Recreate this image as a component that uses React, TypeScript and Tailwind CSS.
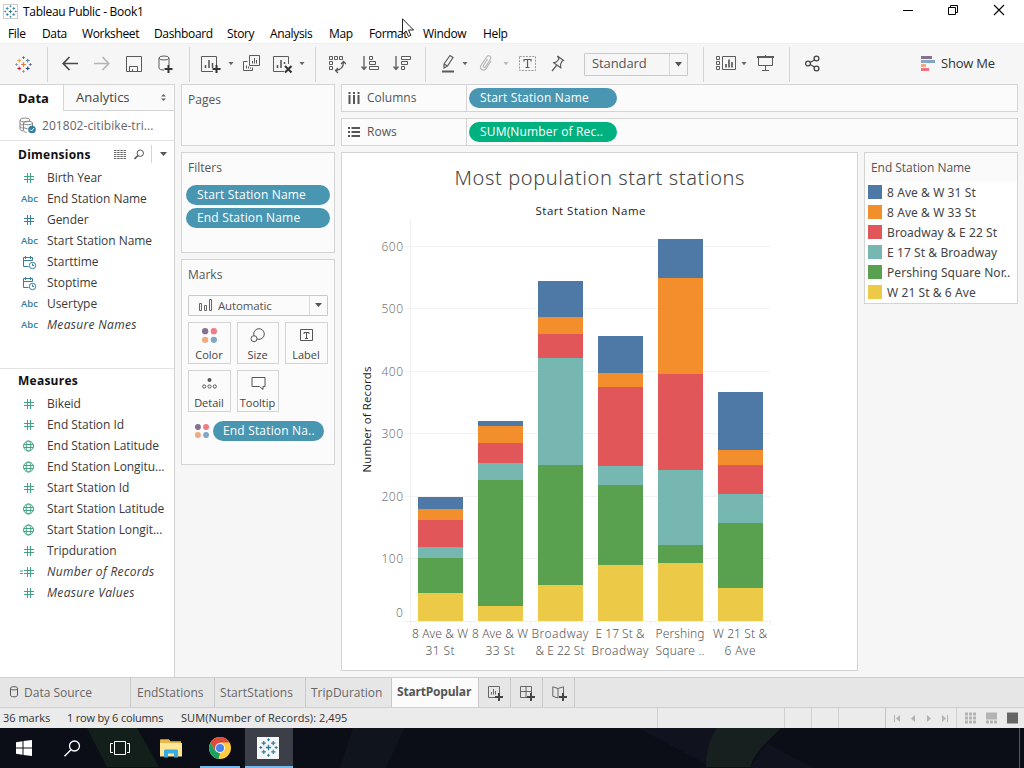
import type { ReactNode } from 'react';
import clsx from 'clsx';

const UI = "font-['Open_Sans','Noto_Sans',sans-serif]";

const COLORS = {
  blue: '#4e79a7',
  orange: '#f28e2b',
  red: '#e15759',
  teal: '#76b7b2',
  green: '#59a14f',
  yellow: '#edc948',
};

/* ---------- small drawing helpers ---------- */

function Svg({ w, h, className, children }: { w: number; h: number; className?: string; children: ReactNode }) {
  return (
    <svg width={w} height={h} viewBox={`0 0 ${w} ${h}`} fill="none" className={clsx('block shrink-0', className)}>
      {children}
    </svg>
  );
}

function Tool({ w, className, color = '#5b5b5b', children }: { w: number; className?: string; color?: string; children: ReactNode }) {
  return (
    <svg
      width={w}
      height={20}
      viewBox={`0 0 ${w} 20`}
      fill="none"
      stroke={color}
      className={clsx('block shrink-0', className)}
    >
      {children}
    </svg>
  );
}

function Caret({ className, color = '#666' }: { className?: string; color?: string }) {
  return (
    <Svg w={6} h={4} className={className}>
      <path d="M.5 0h5L3 3.2z" fill={color} />
    </Svg>
  );
}

function Sep({ className }: { className?: string }) {
  return <div className={clsx('w-px h-[35px] bg-[#d4d4d4] shrink-0', className)} />;
}

const plus = (x: number, y: number, r: number) => `M${x - r} ${y}h${r * 2}M${x} ${y - r}v${r * 2}`;

function TableauMark({ size, mono }: { size: number; mono?: boolean }) {
  const c = (v: string) => (mono ? '#2f7a9b' : v);
  return (
    <svg width={size} height={size} viewBox="0 0 18 18" fill="none" className="block shrink-0">
      <path d={plus(9, 9, 2.5)} stroke={c('#e8762c')} strokeWidth="1.3" />
      <path d={plus(4.5, 4.8, 2)} stroke={c('#e8a33d')} strokeWidth="1.1" />
      <path d={plus(13.5, 4.8, 2)} stroke={c('#5b879b')} strokeWidth="1.1" />
      <path d={plus(4.5, 13.2, 2)} stroke={c('#c72035')} strokeWidth="1.1" />
      <path d={plus(13.5, 13.2, 2)} stroke={c('#1f457e')} strokeWidth="1.1" />
      <path d={plus(9, 1.7, 1.4)} stroke={c('#5c6692')} strokeWidth="1" />
      <path d={plus(9, 16.3, 1.4)} stroke={c('#7199a6')} strokeWidth="1" />
      <path d={plus(1.7, 9, 1.4)} stroke={c('#7199a6')} strokeWidth="1" />
      <path d={plus(16.3, 9, 1.4)} stroke={c('#5c6692')} strokeWidth="1" />
    </svg>
  );
}

/* ---------- title and menu ---------- */

function TitleBar() {
  return (
    <div className="h-[23px] flex items-center bg-white pl-[3px]">
      <div className="w-[15px] h-[15px] border border-[#ccc] flex items-center justify-center">
        <TableauMark size={13} mono />
      </div>
      <span className="ml-[5px] mt-px text-[12px] leading-4 text-black tracking-[-0.28px]">Tableau Public - Book1</span>
      <Svg w={102} h={12} className="ml-auto mr-[19px] mt-[-3px]">
        <path d="M0 6.5h10" stroke="#000" />
        <path d="M45.5 3.5h7v7h-7zM47.5 3.5v-2h7v7h-2" stroke="#000" />
        <path d="M91 1l10 10M101 1L91 11" stroke="#000" strokeWidth="1.1" />
      </Svg>
    </div>
  );
}

const MENU = [
  { label: 'File', w: 'w-[34px]' },
  { label: 'Data', w: 'w-[40px]' },
  { label: 'Worksheet', w: 'w-[72px]' },
  { label: 'Dashboard', w: 'w-[73px]' },
  { label: 'Story', w: 'w-[43px]' },
  { label: 'Analysis', w: 'w-[59px]' },
  { label: 'Map', w: 'w-[40px]' },
  { label: 'Format', w: 'w-[54px]' },
  { label: 'Window', w: 'w-[60px]' },
  { label: 'Help', w: 'w-[40px]' },
];

function MenuBar() {
  return (
    <div className="h-5 flex items-center bg-white pl-2 pt-[2px] text-[12px] leading-4 text-black tracking-[-0.35px]">
      {MENU.map((m) => (
        <span key={m.label} className={clsx('shrink-0 whitespace-nowrap', m.w)}>
          {m.label}
        </span>
      ))}
    </div>
  );
}

/* ---------- toolbar ---------- */

function Toolbar() {
  return (
    <div className="h-[41px] flex items-center bg-[#f6f6f6] border-t border-[#efefef]">
      <div className="w-[47px] pl-[15px]">
        <TableauMark size={17} />
      </div>
      <Sep />
      <Tool w={16} className="ml-[14px]" color="#4a4a4a">
        <path d="M7.5 3L1.200 9.500l6.300 6.500M1.200 9.500H16" strokeWidth="1.7" />
      </Tool>
      <Tool w={16} className="ml-4" color="#b5b5b5">
        <path d="M8.5 3l6.3 6.5L8.5 16M14.8 9.5H0" strokeWidth="1.7" />
      </Tool>
      <Tool w={16} className="ml-4">
        <path d="M.5 2.500h15v15H.5zM3.500 17.500v-5h8v5M6.500 17.500v-2.500" />
      </Tool>
      <Tool w={15} className="ml-4">
        <ellipse cx="6" cy="4" rx="5" ry="2" />
        <path d="M1 4v10c0 1.200 2 2 5 2M11 4v7" />
        <path d="M10.500 11v8M6.500 15h8" strokeWidth="2" stroke="#333" />
      </Tool>
      <Sep className="ml-4" />
      <Tool w={20} className="ml-[11px]">
        <path d="M12 17.500H.5v-15h15V11" />
        <path d="M4.500 14v-3M8 14V6M11.500 14V9" strokeWidth="1.600" />
        <path d="M15.500 11v8M11.500 15h8" strokeWidth="2" stroke="#333" />
      </Tool>
      <Caret className="ml-[7px]" />
      <Tool w={18} className="ml-[9px]">
        <path d="M6.500 1.500h10v10h-10zM4.500 7.500h-4v9h9v-3" />
        <path d="M9.500 9.500V7M11.500 9.500V4M13.500 9.500V6M3.500 14.500v-3M5.500 14.500v-2M7.500 14.500v-1" />
      </Tool>
      <Tool w={20} className="ml-[12px]">
        <path d="M11 17.500H.5v-15h15V10" />
        <path d="M4.500 14v-3M8 14V6M11.500 10V8" strokeWidth="1.600" />
        <path d="M12 12l6.500 6.500M18.500 12L12 18.500" strokeWidth="2.100" stroke="#333" />
      </Tool>
      <Caret className="ml-[6px]" />
      <Sep className="ml-[10px]" />
      <Tool w={17} className="ml-[13px]">
        <path d="M.5 2.500h3v3h-3zM5.500 2.500h3v3h-3zM10.500 2.500h3v3h-3zM.5 7.500h3v3h-3zM.5 12.500h3v3h-3z" />
        <path d="M14.500 8c0 5-3 8-8 8.500M12 10l2.500-2.500L17 10M9 14l-2.500 2.500L9 19" strokeWidth="1.300" />
      </Tool>
      <Tool w={19} className="ml-[15px]">
        <path d="M3 2v13M.5 12.500L3 15.500l2.500-3" strokeWidth="1.300" />
        <path d="M8.500 2.500h3v3h-3zM8.500 7.500h6v3h-6zM8.500 12.500h9v3h-9z" />
      </Tool>
      <Tool w={19} className="ml-[13px]">
        <path d="M3 2v13M.5 12.500L3 15.500l2.500-3" strokeWidth="1.300" />
        <path d="M8.500 2.500h9v3h-9zM8.500 7.500h6v3h-6zM8.500 12.500h3v3h-3z" />
      </Tool>
      <Sep className="ml-[13px]" />
      <Tool w={14} className="ml-[15px]">
        <path d="M3 10L9 1.500l3 2L6.500 12 3 14zM3 10l3.500 2" strokeWidth="1.200" />
        <path d="M1 17.500h12" strokeWidth="2" />
      </Tool>
      <Caret className="ml-[7px]" />
      <Tool w={14} className="ml-[11px]" color="#b8b8b8">
        <path d="M8.500 5L4.500 11.500c-.8 1.600 1.300 2.700 2.200 1.200L11.500 5c1.400-2.700-2.300-4.500-3.900-2L2 11.500c-2 3.800 3 6.500 5.200 3L12 7" strokeWidth="1.200" />
      </Tool>
      <Caret className="ml-[10px]" color="#bbb" />
      <Tool w={17} className="ml-[10px]">
        <path d="M.5 2.500h16v14H.5z" strokeDasharray="2 1.200" stroke="#999" />
        <path d="M5 7.500V5.500h7v2M8.500 5.500v8M6.500 13.500h4" strokeWidth="1.200" />
      </Tool>
      <Tool w={14} className="ml-[15px]">
        <path d="M6.500 2l6 4.500-1.500.8-1.500 3 .2 3.500-7-5 3-1 2.200-2.800zM5.500 11.500L1 17" strokeWidth="1.200" />
      </Tool>
      <div className="ml-[19px] w-[104px] h-[23px] border border-[#c9c9c9] rounded-[1px] flex items-center shrink-0">
        <span className="pl-[7px] flex-1 text-[13px] text-[#555] tracking-[-0.1px]">Standard</span>
        <div className="w-[18px] h-full border-l border-[#d9d9d9] flex items-center justify-center">
          <Svg w={7} h={5}>
            <path d="M0 0h7L3.500 4.500z" fill="#555" />
          </Svg>
        </div>
      </div>
      <Sep className="ml-[15px]" />
      <Tool w={20} className="ml-[12px]">
        <path d="M.5 2.500h3v3h-3zM.5 7.500h3v3h-3zM.5 12.500h3v3h-3zM6.500 2.500h13v13h-13z" />
        <path d="M10 13.500V10M13 13.500V5.500M16 13.500V8" strokeWidth="1.700" />
      </Tool>
      <Caret className="ml-[5px]" />
      <Tool w={17} className="ml-[10px]">
        <path d="M0 3h17" strokeWidth="2" />
        <path d="M1.500 4v7.500h14V4M8.500 1v1M8.500 11.500v5M5 16.500h7" />
      </Tool>
      <Sep className="ml-[15px]" />
      <Tool w={15} className="ml-[15px]" color="#444">
        <circle cx="3" cy="9.500" r="2.400" strokeWidth="1.300" />
        <circle cx="11.500" cy="4.500" r="2.400" strokeWidth="1.300" />
        <circle cx="11.500" cy="14.500" r="2.400" strokeWidth="1.300" />
        <path d="M5 8.500L9.500 6M5 10.500L9.500 13" strokeWidth="1.300" />
      </Tool>
      <Svg w={14} h={16} className="ml-[101px]">
        <path d="M0 0h11v3H0z" fill="#85708f" />
        <path d="M0 4h14v3H0z" fill="#82a6c7" />
        <path d="M0 8h5v3H0z" fill="#f0a981" />
        <path d="M0 12h8v3H0z" fill="#ec737f" />
      </Svg>
      <span className="ml-[6px] text-[13px] text-[#333] whitespace-nowrap tracking-[-0.2px]">Show Me</span>
    </div>
  );
}

/* ---------- data pane ---------- */

type Kind = 'num' | 'calc' | 'abc' | 'date' | 'geo';

type Field = { label: string; kind: Kind; green?: boolean; italic?: boolean };

const DIMENSIONS: Field[] = [
  { label: 'Birth Year', kind: 'num', green: true },
  { label: 'End Station Name', kind: 'abc' },
  { label: 'Gender', kind: 'num' },
  { label: 'Start Station Name', kind: 'abc' },
  { label: 'Starttime', kind: 'date' },
  { label: 'Stoptime', kind: 'date' },
  { label: 'Usertype', kind: 'abc' },
  { label: 'Measure Names', kind: 'abc', italic: true },
];

const MEASURES: Field[] = [
  { label: 'Bikeid', kind: 'num', green: true },
  { label: 'End Station Id', kind: 'num', green: true },
  { label: 'End Station Latitude', kind: 'geo', green: true },
  { label: 'End Station Longitu...', kind: 'geo', green: true },
  { label: 'Start Station Id', kind: 'num', green: true },
  { label: 'Start Station Latitude', kind: 'geo', green: true },
  { label: 'Start Station Longit...', kind: 'geo', green: true },
  { label: 'Tripduration', kind: 'num', green: true },
  { label: 'Number of Records', kind: 'calc', green: true, italic: true },
  { label: 'Measure Values', kind: 'num', green: true, italic: true },
];

function FieldIcon({ kind, green }: { kind: Kind; green?: boolean }) {
  const color = green ? '#3da580' : '#36809c';
  if (kind === 'abc') {
    return <span className="pl-[1px] text-[9.500px] font-semibold text-[#36809c] leading-[21px]">Abc</span>;
  }
  if (kind === 'date') {
    return (
      <Svg w={14} h={14} className="ml-[3px] mt-[2px]">
        <path d="M5.500 10.500h-5v-9h9v3M.5 4.500h9M2.500 0v3M7.500 0v3" stroke={color} />
        <circle cx="9.500" cy="9.500" r="3.200" stroke={color} />
        <path d="M9.500 7.500v2h1.500" stroke={color} />
      </Svg>
    );
  }
  if (kind === 'geo') {
    return (
      <Svg w={12} h={12} className="ml-[3px] mt-px">
        <circle cx="5.500" cy="6" r="5" stroke={color} />
        <ellipse cx="5.500" cy="6" rx="2.300" ry="5" stroke={color} />
        <path d="M1 4.500h9M1 7.500h9" stroke={color} />
      </Svg>
    );
  }
  return (
    <Svg w={15} h={12}>
      <path d="M4 4.500h10M4 7.500h10M7.500 1v10M10.500 1v10" stroke={color} />
      {kind === 'calc' && <path d="M0 5h3M0 7.500h3" stroke={color} />}
    </Svg>
  );
}

function FieldList({ items }: { items: Field[] }) {
  return (
    <ul>
      {items.map((f) => (
        <li key={f.label} className="h-[21px] flex items-center">
          <div className="w-[27px] ml-5 flex items-center">
            <FieldIcon kind={f.kind} green={f.green} />
          </div>
          <span
            className={clsx(
              'text-[12px] leading-[21px] text-[#3a3a3a] whitespace-nowrap',
              f.italic ? 'italic tracking-[0.32px]' : 'tracking-[-0.05px]',
            )}
          >
            {f.label}
          </span>
        </li>
      ))}
    </ul>
  );
}

function DataPane() {
  return (
    <aside className="w-[175px] shrink-0 bg-white border-r border-[#d4d4d4] flex flex-col">
      <div className="h-[27px] flex">
        <div className="w-[63px] border-t border-[#d4d4d4] pl-[18px] text-[13px] leading-[26px] font-bold text-[#111]">Data</div>
        <div className="flex-1 border-l border-t border-b border-[#d4d4d4] bg-[#fafafa] pl-3 pr-[7px] flex items-center justify-between">
          <span className="text-[13px] text-[#444]">Analytics</span>
          <Svg w={7} h={9}>
            <path d="M1 3.500L3.500 1 6 3.500zM1 5.500h5L3.500 8z" fill="#666" />
          </Svg>
        </div>
      </div>
      <div className="h-[29px] flex items-center pl-[19px]">
        <Svg w={18} h={17}>
          <g stroke="#888">
            <ellipse cx="6" cy="3" rx="5" ry="2" />
            <path d="M1 3v9c0 1 1.500 1.500 3 2M1 6.500c0 .8 1 1.300 3 1.500M1 9.500c0 .8 1 1.300 3 1.500" />
            <ellipse cx="9" cy="6" rx="4.500" ry="1.800" />
            <path d="M4.500 6v7.500c0 1 1 1.500 3 2M13.500 6v3M4.500 10c0 .8 2 1.600 4 1.600" />
          </g>
          <circle cx="13" cy="12.500" r="3.800" fill="#2f7f9f" />
          <path d="M11 12.500l1.500 1.500 2.500-3" stroke="#fff" />
        </Svg>
        <span className="ml-[5px] text-[12px] text-[#666] whitespace-nowrap tracking-[0.06px]">201802-citibike-tri...</span>
      </div>
      <div className="border-t border-[#e2e2e2] h-[27px] flex items-center pl-[18px]">
        <span className="w-[96px] mt-px text-[12px] font-bold text-[#111] tracking-[0.25px]">Dimensions</span>
        <Svg w={12} h={9}>
          <path d="M0 .5h12M0 2.500h12M0 4.500h12M0 6.500h12M0 8.500h12" stroke="#666" strokeDasharray="2.400 .8" />
        </Svg>
        <Svg w={11} h={11} className="ml-2">
          <circle cx="6.300" cy="4.200" r="3.200" stroke="#555" />
          <path d="M4 6.500L.5 10" stroke="#555" strokeWidth="1.600" />
        </Svg>
        <div className="ml-[6px] w-px h-[18px] bg-[#d4d4d4]" />
        <Svg w={7} h={5} className="ml-2">
          <path d="M0 0h7L3.500 4z" fill="#555" />
        </Svg>
      </div>
      <div className="h-[201px]">
        <FieldList items={DIMENSIONS} />
      </div>
      <div className="border-t border-[#e2e2e2] h-[25px] pl-[18px] text-[12px] leading-[23px] font-bold text-[#111] tracking-[0.25px]">
        Measures
      </div>
      <FieldList items={MEASURES} />
    </aside>
  );
}

/* ---------- cards ---------- */

function Pill({ children, className, green }: { children: ReactNode; className?: string; green?: boolean }) {
  return (
    <div
      className={clsx(
        'h-5 rounded-full text-white text-[12px] font-medium leading-5 whitespace-nowrap overflow-hidden tracking-[0.17px]',
        green ? 'bg-[#00b180]' : 'bg-[#4996b2]',
        className,
      )}
    >
      {children}
    </div>
  );
}

function Card({ title, className, children }: { title: string; className: string; children?: ReactNode }) {
  return (
    <section className={clsx('border border-[#d4d4d4] bg-[#fbfbfb]', className)}>
      <h2 className="pl-[6px] pt-[6px] h-[30px] text-[12px] leading-[18px] text-[#555]">{title}</h2>
      {children}
    </section>
  );
}

function Dots({ size }: { size: number }) {
  return (
    <Svg w={size} h={size}>
      <circle cx={size * 0.21} cy={size * 0.21} r={size * 0.21} fill="#85708f" />
      <circle cx={size * 0.79} cy={size * 0.21} r={size * 0.21} fill="#f07a88" />
      <circle cx={size * 0.21} cy={size * 0.79} r={size * 0.21} fill="#f0a981" />
      <circle cx={size * 0.79} cy={size * 0.79} r={size * 0.21} fill="#82a6c7" />
    </Svg>
  );
}

function MarkButton({ label, children }: { label: string; children: ReactNode }) {
  return (
    <div className="h-[42px] border border-[#d4d4d4] bg-[#fbfbfb] flex flex-col items-center">
      <div className="h-[25px] flex items-center">{children}</div>
      <span className="text-[11px] leading-[14px] text-[#444] -ml-px">{label}</span>
    </div>
  );
}

function Cards() {
  return (
    <div className="w-[154px] ml-[6px] shrink-0 flex flex-col gap-[6px]">
      <Card title="Pages" className="h-[62px]" />
      <Card title="Filters" className="h-[101px]">
        <div className="flex flex-col gap-[3px] px-1 mt-[2px]">
          <Pill className="pl-[11px]">Start Station Name</Pill>
          <Pill className="pl-[11px]">End Station Name</Pill>
        </div>
      </Card>
      <Card title="Marks" className="h-[206px]">
        <div className="mx-[6px] mt-[5px] h-[21px] border border-[#c9c9c9] rounded-[1px] flex items-center">
          <Svg w={14} h={13} className="ml-[10px]">
            <path d="M.5 4.500h2v7h-2zM5.500 6.500h2v5h-2zM10.500 .5h2v11h-2z" stroke="#666" />
          </Svg>
          <span className="ml-[5px] flex-1 text-[11.500px] text-[#555] tracking-[-0.15px]">Automatic</span>
          <div className="w-[18px] h-full border-l border-[#d9d9d9] flex items-center justify-center">
            <Svg w={7} h={5}>
              <path d="M0 0h7L3.500 4z" fill="#555" />
            </Svg>
          </div>
        </div>
        <div className="mx-[6px] mt-[6px] grid grid-cols-[43px_42px_43px] gap-x-[6px] gap-y-[6px]">
          <MarkButton label="Color">
            <Dots size={15} />
          </MarkButton>
          <MarkButton label="Size">
            <Svg w={16} h={15}>
              <circle cx="9" cy="6" r="5.300" stroke="#555" />
              <circle cx="4" cy="10.700" r="3" stroke="#555" fill="#fbfbfb" />
            </Svg>
          </MarkButton>
          <MarkButton label="Label">
            <Svg w={13} h={13}>
              <path d="M.5 .5h12v11H.5z" stroke="#555" />
              <path d="M4 5V3.500h5V5M6.500 3.500v6M5 9.500h3" stroke="#555" />
            </Svg>
          </MarkButton>
          <MarkButton label="Detail">
            <Svg w={15} h={11}>
              <circle cx="7.500" cy="2" r="2" fill="#555" />
              <circle cx="2.200" cy="8.500" r="1.600" stroke="#555" />
              <circle cx="7.500" cy="8.500" r="1.600" stroke="#555" />
              <circle cx="12.800" cy="8.500" r="1.600" stroke="#555" />
            </Svg>
          </MarkButton>
          <MarkButton label="Tooltip">
            <Svg w={15} h={14}>
              <path d="M1 .5h13v9h-2v3l-3.500-3H1z" stroke="#555" />
            </Svg>
          </MarkButton>
        </div>
        <div className="mt-[9px] ml-[13px] flex items-center gap-1">
          <Dots size={14} />
          <Pill className="w-[111px] pl-[10px]">End Station Na..</Pill>
        </div>
      </Card>
    </div>
  );
}

function Shelf({ label, icon, children }: { label: string; icon: ReactNode; children: ReactNode }) {
  return (
    <div className="h-[28px] w-[677px] border border-[#d4d4d4] bg-[#fbfbfb] flex">
      <div className="w-[125px] border-r border-[#d4d4d4] flex items-center pl-[6px] gap-[7px]">
        {icon}
        <span className="text-[12px] text-[#555]">{label}</span>
      </div>
      <div className="pl-[2px] pt-[3px]">{children}</div>
    </div>
  );
}

/* ---------- chart ---------- */

const BASE = 621;
const SERIES = [COLORS.blue, COLORS.orange, COLORS.red, COLORS.teal, COLORS.green, COLORS.yellow];

// top edge of each coloured segment, listed from the top of the bar down
const BARS = [
  { lines: ['8 Ave & W', '31 St'], widths: [56, 29], tops: [497, 509, 520, 547, 558, 593] },
  { lines: ['8 Ave & W', '33 St'], widths: [56, 29], tops: [421, 426, 443, 463, 480, 606] },
  { lines: ['Broadway', '& E 22 St'], widths: [57, 49], tops: [281, 317, 334, 358, 465, 585] },
  { lines: ['E 17 St &', 'Broadway'], widths: [49, 57], tops: [336, 373, 387, 466, 485, 565] },
  { lines: ['Pershing', 'Square ..'], widths: [49, 49], tops: [239, 278, 374, 470, 545, 563] },
  { lines: ['W 21 St &', '6 Ave'], widths: [54, 31], tops: [392, 450, 465, 494, 523, 588] },
];

const TICKS = [
  { v: 600, y: 246 },
  { v: 500, y: 308 },
  { v: 400, y: 371 },
  { v: 300, y: 433 },
  { v: 200, y: 496 },
  { v: 100, y: 558 },
];

function Chart() {
  return (
    <div className="w-[517px] h-[519px] shrink-0 bg-white border border-[#d4d4d4]">
      <svg
        width={515}
        height={517}
        viewBox="342 153 515 517"
        className="block font-['Noto_Sans','Open_Sans',sans-serif]"
        shapeRendering="crispEdges"
      >
        <text x="454.500" y="185" fontSize="20" fontWeight="300" fill="#444" textLength="290">
          Most population start stations
        </text>
        <g className={UI} fontSize="11.500" fontWeight="500" fill="#222">
          <text x="535.500" y="215" textLength="110">
            Start Station Name
          </text>
          <text transform="translate(371 472.500) rotate(-90)" textLength="106">
            Number of Records
          </text>
        </g>
        {TICKS.map((t) => (
          <g key={t.v}>
            <path d={`M405 ${t.y + 0.5}H770`} stroke="#f2f2f2" />
            <text x="381.500" y={t.y + 5} fontSize="12" fill="#777" fontWeight="300" textLength="21.500">
              {t.v}
            </text>
          </g>
        ))}
        <text x="396" y="617" fontSize="12" fill="#777" fontWeight="300">
          0
        </text>
        <path d="M410.500 220V625M405 621.500H771" stroke="#f0f0f0" />
        {BARS.map((b, i) => (
          <g key={i}>
            {b.tops.map((top, s) => (
              <rect key={s} x={418 + i * 60} y={top} width={45} height={(b.tops[s + 1] ?? BASE) - top} fill={SERIES[s]} />
            ))}
            <path d={`M${470.5 + i * 60} 621v4`} stroke="#eee" />
            {b.lines.map((line, n) => (
              <text
                key={n}
                x={440 + i * 60 - b.widths[n] / 2}
                y={638 + n * 17}
                fontSize="12"
                fontWeight="300"
                fill="#555"
                textLength={b.widths[n]}
              >
                {line}
              </text>
            ))}
          </g>
        ))}
      </svg>
    </div>
  );
}

const LEGEND = [
  { label: '8 Ave & W 31 St', color: 'bg-[#4e79a7]' },
  { label: '8 Ave & W 33 St', color: 'bg-[#f28e2b]' },
  { label: 'Broadway & E 22 St', color: 'bg-[#e15759]' },
  { label: 'E 17 St & Broadway', color: 'bg-[#76b7b2]' },
  { label: 'Pershing Square Nor..', color: 'bg-[#59a14f]' },
  { label: 'W 21 St & 6 Ave', color: 'bg-[#edc948]' },
];

function Legend() {
  return (
    <div className="ml-[6px] w-[154px] h-[152px] shrink-0 border border-[#d4d4d4] bg-white">
      <div className="h-[29px] bg-[#fafafa] pl-[6px] text-[12px] leading-[29px] text-[#555] tracking-[-0.05px]">End Station Name</div>
      {LEGEND.map((l) => (
        <div key={l.label} className="h-5 flex items-center pl-[3px]">
          <div className={clsx('w-[14px] h-[14px] shrink-0', l.color)} />
          <span className="ml-[5px] mt-[2px] text-[12px] leading-5 text-[#444] whitespace-nowrap tracking-[0.08px] font-['Noto_Sans','Open_Sans',sans-serif]">
            {l.label}
          </span>
        </div>
      ))}
    </div>
  );
}

/* ---------- bottom bars ---------- */

function SheetTabs() {
  const tab = 'h-full border-r border-[#c8c8c8] flex shrink-0 whitespace-nowrap';
  return (
    <div className="h-[30px] bg-[#e6e6e6] border-t border-[#cfcfcf] flex text-[12px] leading-[29px] text-[#666]">
      <div className={clsx(tab, 'w-[131px] pl-[10px]')}>
        <Svg w={8} h={12} className="mt-2">
          <path
            d="M.5 2.300C.5 1.100 2 .7 4 .7s3.500.4 3.500 1.600v6.900c0 1.200-1.500 1.600-3.500 1.600S.5 10.400.5 9.200zM.5 2.300C.5 3.500 2 3.900 4 3.900s3.500-.4 3.500-1.600"
            stroke="#555"
          />
        </Svg>
        <span className="ml-[6px]">Data Source</span>
      </div>
      <div className={clsx(tab, 'w-[84px] pl-[6px]')}>EndStations</div>
      <div className={clsx(tab, 'w-[91px] pl-[5px] tracking-[0.1px]')}>StartStations</div>
      <div className={clsx(tab, 'w-[86px] pl-[5px]')}>TripDuration</div>
      <div className={clsx(tab, 'w-[87px] pl-[5px] bg-[#fbfbfb] font-bold text-[#555] leading-[27px] tracking-[-0.2px]')}>
        StartPopular
      </div>
      <div className={clsx(tab, 'w-[32px] pl-[9px] pt-2')}>
        <Svg w={15} h={16}>
          <path d="M7 11.500H.5v-11h11V7" stroke="#666" />
          <path d="M3.500 8.500V6M5.500 8.500V3M7.500 8.500V5" stroke="#666" />
          <path d="M11 7v8M7 11h8" stroke="#444" strokeWidth="2" />
        </Svg>
      </div>
      <div className={clsx(tab, 'w-[32px] pl-[9px] pt-2')}>
        <Svg w={15} h={16}>
          <path d="M7 11.500H.5v-11h11V7M6 .5v11M.5 5.500h11" stroke="#666" />
          <path d="M11 7v8M7 11h8" stroke="#444" strokeWidth="2" />
        </Svg>
      </div>
      <div className={clsx(tab, 'w-[32px] pl-[9px] pt-2')}>
        <Svg w={15} h={16}>
          <path d="M6 2.500L.8 .8v9.500L6 12V2.500L11.500 .8V7" stroke="#666" />
          <path d="M11 7v8M7 11h8" stroke="#444" strokeWidth="2" />
        </Svg>
      </div>
    </div>
  );
}

function StatusBar() {
  return (
    <div className="h-[21px] bg-[#ebebeb] border-t border-[#cfcfcf] flex items-center text-[11px] text-[#333] pl-[3px] whitespace-nowrap">
      <span className="w-[64px]">36 marks</span>
      <span className="w-[114px] tracking-[-0.18px]">1 row by 6 columns</span>
      <span className="w-[476px] tracking-[0.08px]">SUM(Number of Records): 2,495</span>
      <div className="h-full w-[127px] border-l border-[#cfcfcf]" />
      <div className="h-full w-[27px] border-l border-[#cfcfcf]" />
      <div className="h-full w-[27px] border-l border-[#cfcfcf]" />
      <div className="h-full w-[47px] border-l border-[#cfcfcf]" />
      <div className="h-full w-[71px] border-l border-[#c4c4c4] flex items-center pl-[8px]">
        <Svg w={56} h={8}>
          <path d="M0 1h1v7H0zM6 1v7L2 4.500zM21 1v7l-4-3.500zM33 1v7l4-3.500zM48 1v7l4-3.500zM53 1h1v7h-1z" fill="#b3b3b3" />
        </Svg>
      </div>
      <div className="h-full flex-1 border-l border-[#cfcfcf] flex items-center pl-[8px]">
        <Svg w={54} h={12}>
          <path
            d="M0 .5h3v3H0zM4 .5h3v3H4zM8 .5h3v3H8zM0 4.500h3v3H0zM4 4.500h3v3H4zM8 4.500h3v3H8zM0 8.500h3v3H0zM4 8.500h3v3H4zM8 8.500h3v3H8z"
            fill="#b3b3b3"
          />
          <path d="M21 .5h11v7H21zM21 8.500h3v3h-3zM25 8.500h3v3h-3zM29 8.500h3v3h-3z" fill="#b3b3b3" />
          <path d="M42 .5h11v11H42z" fill="#666" />
        </Svg>
      </div>
    </div>
  );
}

function Taskbar() {
  return (
    <div className="relative h-[40px] bg-[#0b0e17] overflow-hidden">
      <svg width={1024} height={40} viewBox="0 0 1024 40" className="absolute inset-0">
        <path d="M87 0h50l22 39h-52z" fill="#121f1b" />
        <path d="M353 0h51l-18 40h-46z" fill="#10141d" />
        <path d="M638 0h80l-12 36zM767 15l46 25h-63z" fill="#10131d" />
        <path d="M717 0h64c-14 14-29 27-30 39h-45c0-14 3-27 11-39z" fill="#15201f" />
        <path d="M1019.500 0v40" stroke="#555a63" />
      </svg>
      <div className="relative h-full flex items-center">
        <Svg w={16} h={16} className="ml-4">
          <path d="M0 2.300L6.500 1.300v6.200H0zM7.500 1.100L16 0v7.500H7.500zM0 8.500h6.500v6.200L0 13.700zM7.500 8.500H16V16l-8.500-1.100z" fill="#fff" />
        </Svg>
        <Svg w={17} h={17} className="ml-8">
          <circle cx="10.500" cy="6" r="5" stroke="#fff" strokeWidth="1.300" />
          <path d="M7 9.800L.5 16.300" stroke="#fff" strokeWidth="1.500" />
        </Svg>
        <Svg w={20} h={14} className="ml-[29px]">
          <path d="M4.500 .5h11v13h-11zM3 2.500H.5v9H3M17 2.500h2.500v9H17" stroke="#fff" />
        </Svg>
        <Svg w={22} h={19} className="ml-[30px]">
          <path d="M0 1.500C0 .7.500 .3 1.200 .3H9l1.500 2H21v4H0z" fill="#e8b64a" />
          <path d="M0 4h22v13.500H0z" fill="#ffe694" />
          <path d="M4 18.500v-6.500c0-1 .6-1.500 1.500-1.500h11c.9 0 1.500.5 1.500 1.500v6.500h-4v-4H8v4z" fill="#3aa9e0" />
        </Svg>
        <div className="ml-[18px] w-[40px] h-full border-b-2 border-[#76b9ed] flex items-center justify-center pt-[1px]">
          <Svg w={22} h={22}>
            <circle cx="11" cy="11" r="11" fill="#ffcd41" />
            <path d="M1.500 5.500A11 11 0 0 1 20.500 5.500H11L6.200 13.800z" fill="#dd4b3e" />
            <path d="M1.500 5.500L6.200 13.800 11 16.500l-1.500 5.400A11 11 0 0 1 1.500 5.500z" fill="#1aa260" />
            <circle cx="11" cy="11" r="5" fill="#f1f1f1" />
            <circle cx="11" cy="11" r="4" fill="#4a83ee" />
          </Svg>
        </div>
        <div className="ml-[5px] w-[48px] h-full bg-[#3c3f47] border-b-2 border-[#76b9ed] flex items-center justify-center pt-[1px]">
          <div className="w-[22px] h-[22px] bg-[#f4f6f7] flex items-center justify-center mr-[2px]">
            <TableauMark size={19} mono />
          </div>
        </div>
      </div>
    </div>
  );
}

export default function App() {
  return (
    <div className={clsx('relative w-[1024px] h-[768px] overflow-hidden bg-[#f6f6f6] flex flex-col', UI)}>
      <TitleBar />
      <MenuBar />
      <Toolbar />
      <div className="h-[593px] flex">
        <DataPane />
        <Cards />
        <div className="ml-[6px] flex flex-col gap-[6px]">
          <Shelf
            label="Columns"
            icon={
              <Svg w={12} h={12}>
                <path d="M1.500 0v2M1.500 3v9M6 0v2M6 3v9M10.500 0v2M10.500 3v9" stroke="#555" strokeWidth="2" />
              </Svg>
            }
          >
            <Pill className="w-[148px] pl-[11px]">Start Station Name</Pill>
          </Shelf>
          <Shelf
            label="Rows"
            icon={
              <Svg w={12} h={12}>
                <path d="M0 2h2M3.500 2H12M0 6h2M3.500 6H12M0 10h2M3.500 10H12" stroke="#555" strokeWidth="1.800" />
              </Svg>
            }
          >
            <Pill green className="w-[148px] pl-[11px]">
              SUM(Number of Rec..
            </Pill>
          </Shelf>
          <div className="flex">
            <Chart />
            <Legend />
          </div>
        </div>
      </div>
      <SheetTabs />
      <StatusBar />
      <Taskbar />
      <svg width={13} height={20} viewBox="0 0 13 20" className="absolute left-[402px] top-[18px]">
        <path d="M.5 .8v15.500l3.600-3.400 2.300 5.500 2.500-1-2.400-5.400h5z" fill="#fff" stroke="#222" />
      </svg>
    </div>
  );
}
